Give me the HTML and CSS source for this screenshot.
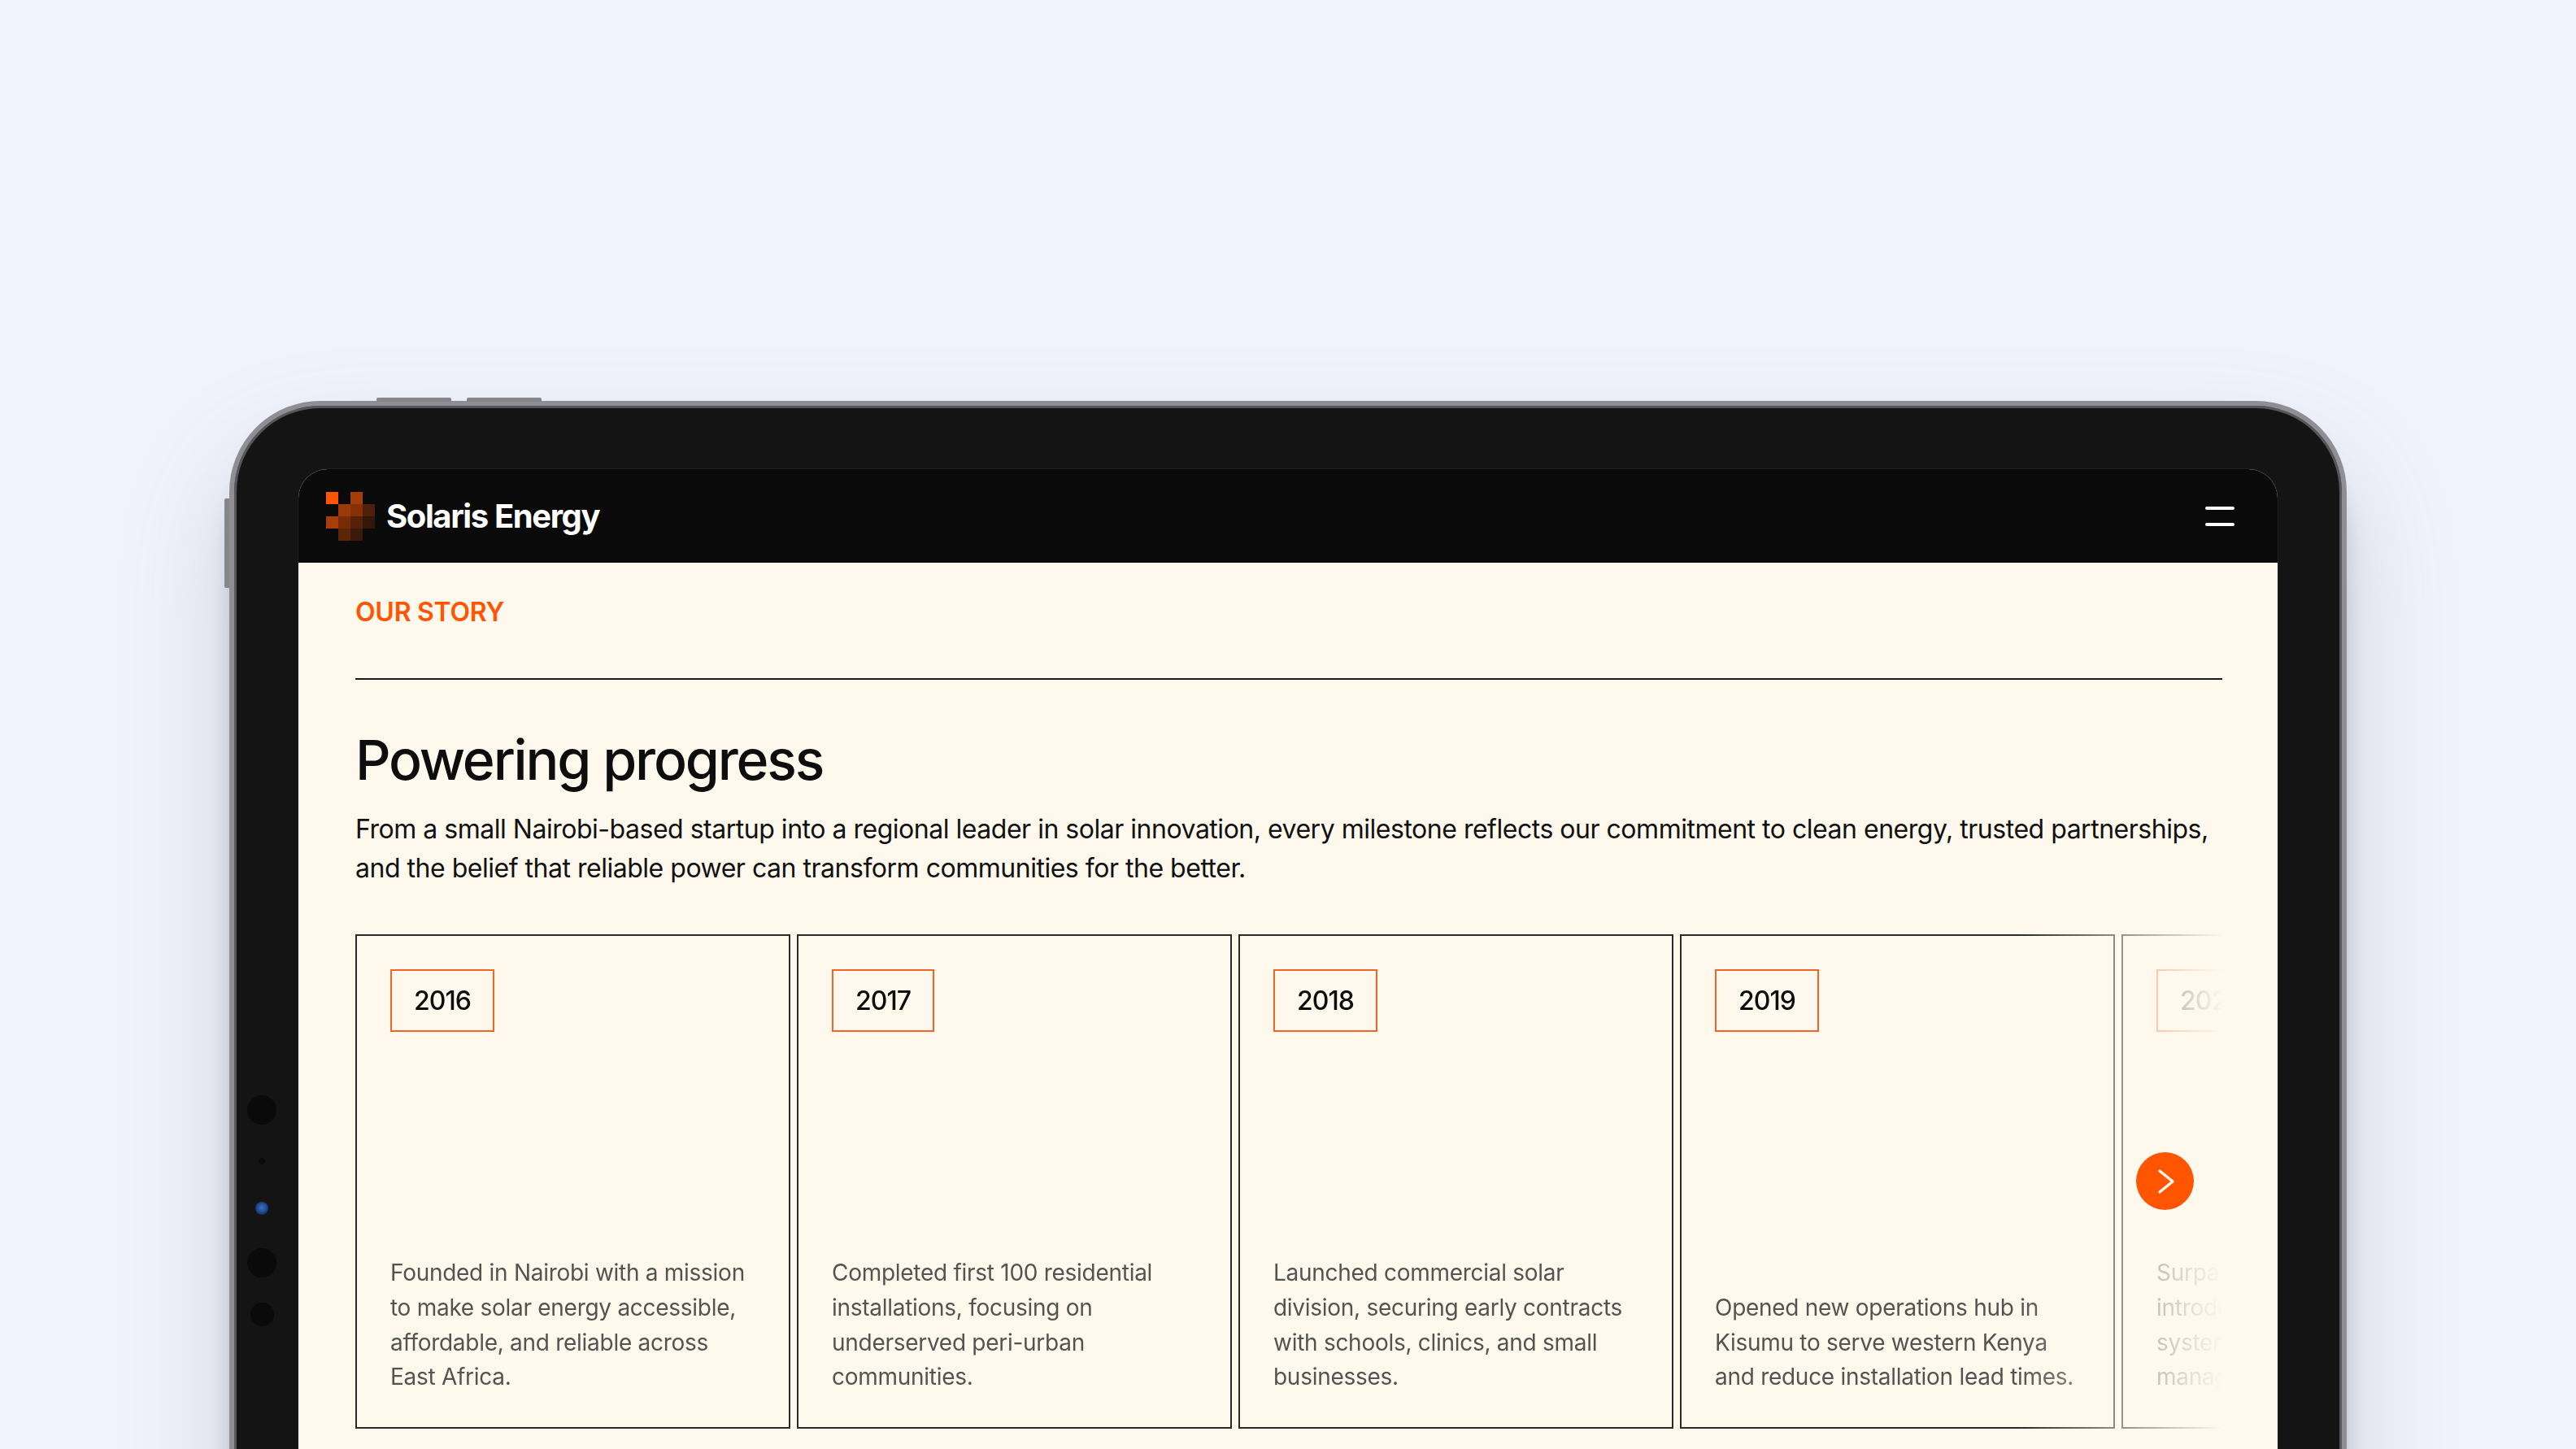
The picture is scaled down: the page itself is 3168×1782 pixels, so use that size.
FILE: index.html
```html
<!DOCTYPE html>
<html lang="en">
<head>
    <meta charset="UTF-8">
    <meta name="viewport" content="width=device-width, initial-scale=1.0">
    <title>Solaris Energy - Our Story</title>
    <link rel="stylesheet" href="styles.css">
</head>
<body>
    <div class="device">
        <div class="top-buttons">
            <span class="hw-button"></span>
            <span class="hw-button"></span>
        </div>
        <span class="side-button"></span>
        <div class="sensors">
            <span class="sensor sensor-a"></span>
            <span class="sensor sensor-dot"></span>
            <span class="sensor sensor-lens"></span>
            <span class="sensor sensor-b"></span>
            <span class="sensor sensor-c"></span>
        </div>

        <div class="screen">
            <header class="navbar">
                <div class="brand">
                    <svg class="brand-mark" width="60" height="60" viewBox="0 0 4 4" shape-rendering="crispEdges">
                        <rect x="0" y="0" width="1" height="1" fill="#ff5500"/>
                        <rect x="2" y="0" width="1" height="1" fill="#a63c08"/>
                        <rect x="1" y="1" width="1" height="1" fill="#9c3908"/>
                        <rect x="2" y="1" width="1" height="1" fill="#853006"/>
                        <rect x="3" y="1" width="1" height="1" fill="#4e2108"/>
                        <rect x="0" y="2" width="1" height="1" fill="#a83d06"/>
                        <rect x="1" y="2" width="1" height="1" fill="#772c08"/>
                        <rect x="2" y="2" width="1" height="1" fill="#552108"/>
                        <rect x="3" y="2" width="1" height="1" fill="#33180a"/>
                        <rect x="1" y="3" width="1" height="1" fill="#5c2508"/>
                        <rect x="2" y="3" width="1" height="1" fill="#3a1b0a"/>
                    </svg>
                    <span class="brand-name">Solaris Energy</span>
                </div>
                <div class="menu-icon">
                    <span></span>
                    <span></span>
                </div>
            </header>

            <main class="content">
                <p class="eyebrow">OUR STORY</p>
                <hr class="rule">
                <h1 class="title">Powering progress</h1>
                <p class="lead">From a small Nairobi-based startup into a regional leader in solar innovation, every milestone reflects our commitment to clean energy, trusted partnerships, and the belief that reliable power can transform communities for the better.</p>

                <div class="timeline-wrap">
                    <div class="timeline">
                        <article class="card">
                            <span class="year">2016</span>
                            <p class="card-text">Founded in Nairobi with a mission to make solar energy accessible, affordable, and reliable across East Africa.</p>
                        </article>
                        <article class="card">
                            <span class="year">2017</span>
                            <p class="card-text">Completed first 100 residential installations, focusing on underserved peri-urban communities.</p>
                        </article>
                        <article class="card">
                            <span class="year">2018</span>
                            <p class="card-text">Launched commercial solar division, securing early contracts with schools, clinics, and small businesses.</p>
                        </article>
                        <article class="card">
                            <span class="year">2019</span>
                            <p class="card-text">Opened new operations hub in Kisumu to serve western Kenya and reduce installation lead times.</p>
                        </article>
                        <article class="card">
                            <span class="year">2020</span>
                            <p class="card-text">Surpassed 500 installations and introduced smart monitoring systems for remote energy management.</p>
                        </article>
                    </div>
                    <button class="next-btn" type="button" aria-label="Next">
                        <svg class="next-icon" width="22" height="32" viewBox="0 0 22 32" fill="none" stroke="#fff8ec" stroke-width="3.4" stroke-linecap="round" stroke-linejoin="round">
                            <path d="M3 3l16 13L3 29"/>
                        </svg>
                    </button>
                </div>
            </main>
        </div>
    </div>
</body>
</html>
```

FILE: styles.css
```css
* {
    margin: 0;
    padding: 0;
    box-sizing: border-box;
}

body {
    font-family: Inter, "Noto Sans", sans-serif;
    background: #f1f2fb;
    height: 100vh;
    overflow: hidden;
    padding-top: 493px;
}

.device {
    position: relative;
    width: 2604px;
    height: 1500px;
    margin: 0 auto;
    padding: 78px 79px 0 79px;
    background: #141414;
    border: 6px solid #8e8e94;
    border-radius: 112px;
    box-shadow:
        inset 0 0 0 3px #56565b,
        0 60px 24px 0 rgba(60, 64, 80, 0.2),
        0 70px 130px rgba(110, 118, 130, 0.26);
}

.top-buttons {
    position: absolute;
    top: -10px;
    left: 175px;
    display: flex;
    gap: 19px;
}

.hw-button {
    width: 92px;
    height: 5px;
    background: #85858a;
    border-radius: 2px 2px 0 0;
}

.side-button {
    position: absolute;
    top: 114px;
    left: -12px;
    width: 6px;
    height: 110px;
    background: #85858a;
    border-radius: 2px 0 0 2px;
}

.sensors {
    position: absolute;
    top: 848px;
    left: 16px;
    width: 36px;
    display: flex;
    flex-direction: column;
    align-items: center;
}

.sensor {
    display: block;
    border-radius: 50%;
    background: #0a0a0a;
}

.sensor-a {
    width: 36px;
    height: 36px;
}

.sensor-dot {
    width: 8px;
    height: 8px;
    margin-top: 41px;
}

.sensor-lens {
    width: 16px;
    height: 16px;
    margin-top: 46px;
    background: radial-gradient(circle at 50% 45%, #3a74c0 0, #1c4488 55%, #0b1830 100%);
}

.sensor-b {
    width: 36px;
    height: 36px;
    margin-top: 41px;
}

.sensor-c {
    width: 29px;
    height: 29px;
    margin-top: 31px;
}

.screen {
    background: #fff8ec;
    height: 100%;
    border-radius: 36px 36px 0 0;
    overflow: hidden;
    box-shadow: 0 0 0 1px #1d1f21;
}

.navbar {
    height: 115px;
    background: #0a0a0a;
    display: flex;
    align-items: center;
    justify-content: space-between;
    padding: 0 53px 0 34px;
}

.brand {
    display: flex;
    align-items: center;
    gap: 14px;
}

.brand-mark {
    display: block;
}

.brand-name {
    color: #fff;
    font-size: 40px;
    font-weight: 700;
    letter-spacing: -0.035em;
}

.menu-icon {
    width: 36px;
    display: flex;
    flex-direction: column;
    gap: 16px;
}

.menu-icon span {
    display: block;
    height: 4px;
    background: #fff;
    border-radius: 2px;
}

.content {
    padding: 0 68px 0 70px;
}

.eyebrow {
    color: #ff5500;
    font-size: 32px;
    font-weight: 600;
    letter-spacing: -0.008em;
    line-height: 40px;
    margin-top: 41px;
}

.rule {
    border: none;
    height: 2px;
    background: #1a1a1a;
    margin-top: 61px;
}

.title {
    font-size: 68px;
    font-weight: 450;
    letter-spacing: -0.032em;
    color: #0d0d0d;
    line-height: 90px;
    margin-top: 53px;
}

.lead {
    font-size: 32px;
    line-height: 48px;
    letter-spacing: -0.015em;
    color: #111;
    margin-top: 17px;
}

.timeline-wrap {
    position: relative;
    margin-top: 57px;
}

.timeline {
    display: flex;
    gap: 8px;
    overflow: hidden;
    -webkit-mask-image: linear-gradient(to right, #000 calc(100% - 250px), transparent 100%);
    mask-image: linear-gradient(to right, #000 calc(100% - 250px), transparent 100%);
}

.card {
    flex: 0 0 535px;
    height: 608px;
    border: 2px solid #2a2a28;
    padding: 41px 41px 40px;
    display: flex;
    flex-direction: column;
    justify-content: space-between;
    align-items: flex-start;
}

.year {
    border: 2px solid #f0662a;
    height: 77px;
    padding: 0 27px;
    display: flex;
    align-items: center;
    font-size: 32px;
    font-weight: 500;
    letter-spacing: -0.03em;
    color: #0d0d0d;
}

.card-text {
    font-size: 28px;
    line-height: 42.67px;
    letter-spacing: -0.01em;
    color: #555350;
}

.next-btn {
    position: absolute;
    top: 268px;
    right: 35px;
    width: 71px;
    height: 71px;
    border: none;
    border-radius: 50%;
    background: #ff5500;
    display: flex;
    align-items: center;
    justify-content: center;
    cursor: pointer;
}

.next-icon {
    margin-left: 2px;
}
```
